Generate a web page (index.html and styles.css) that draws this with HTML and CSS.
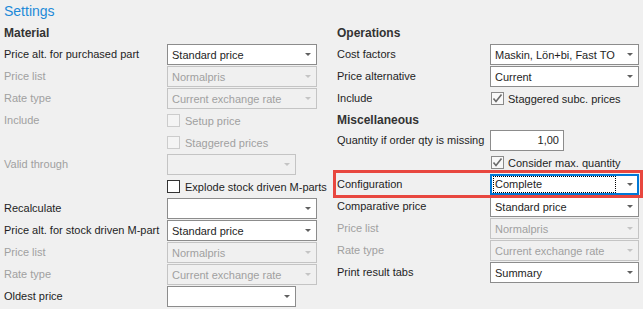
FILE: index.html
```html
<!doctype html>
<html lang="en">
<head>
	<meta charset="UTF-8">
	<title>Settings</title>
	<link rel="stylesheet" href="styles.css">
</head>
<body>
	<div class="page">
		<div class="title">Settings</div>
		<div class="cols">
			<div class="col">
				<div class="head">Material</div>
				<div class="row"><span class="lbl">Price alt. for purchased part</span><span class="combo"><span class="val">Standard price</span><i class="arrow"></i></span></div>
				<div class="row off"><span class="lbl">Price list</span><span class="combo"><span class="val">Normalpris</span><i class="arrow"></i></span></div>
				<div class="row off"><span class="lbl">Rate type</span><span class="combo"><span class="val">Current exchange rate</span><i class="arrow"></i></span></div>
				<div class="row off"><span class="lbl">Include</span><span class="check"><i class="box"></i>Setup price</span></div>
				<div class="row off"><span class="lbl"></span><span class="check"><i class="box"></i>Staggered prices</span></div>
				<div class="row off"><span class="lbl">Valid through</span><span class="combo short"><span class="val"></span><i class="arrow"></i></span></div>
				<div class="row"><span class="lbl"></span><span class="check"><i class="box"></i>Explode stock driven M-parts</span></div>
				<div class="row"><span class="lbl">Recalculate</span><span class="combo"><span class="val"></span><i class="arrow"></i></span></div>
				<div class="row"><span class="lbl">Price alt. for stock driven M-part</span><span class="combo"><span class="val">Standard price</span><i class="arrow"></i></span></div>
				<div class="row off"><span class="lbl">Price list</span><span class="combo"><span class="val">Normalpris</span><i class="arrow"></i></span></div>
				<div class="row off"><span class="lbl">Rate type</span><span class="combo"><span class="val">Current exchange rate</span><i class="arrow"></i></span></div>
				<div class="row"><span class="lbl">Oldest price</span><span class="combo short"><span class="val"></span><i class="arrow"></i></span></div>
			</div>
			<div class="col right">
				<div class="head">Operations</div>
				<div class="row"><span class="lbl">Cost factors</span><span class="combo"><span class="val">Maskin, Lön+bi, Fast TO</span><i class="arrow"></i></span></div>
				<div class="row"><span class="lbl">Price alternative</span><span class="combo"><span class="val">Current</span><i class="arrow"></i></span></div>
				<div class="row"><span class="lbl">Include</span><span class="check on"><i class="box"><svg width="11" height="11" viewBox="0 0 11 11"><path d="M1.5 5.5 L4 8.5 L9.5 1.5" fill="none" stroke="#6a6a6a" stroke-width="1.6"/></svg></i>Staggered subc. prices</span></div>
				<div class="head misc">Miscellaneous</div>
				<div class="row"><span class="lbl">Quantity if order qty is missing</span><span class="num">1,00</span></div>
				<div class="row"><span class="lbl"></span><span class="check on"><i class="box"><svg width="11" height="11" viewBox="0 0 11 11"><path d="M1.5 5.5 L4 8.5 L9.5 1.5" fill="none" stroke="#6a6a6a" stroke-width="1.6"/></svg></i>Consider max. quantity</span></div>
				<div class="row"><span class="lbl">Configuration</span><span class="combo focus"><span class="val">Complete</span><i class="arrow"></i></span></div>
				<div class="row"><span class="lbl">Comparative price</span><span class="combo"><span class="val">Standard price</span><i class="arrow"></i></span></div>
				<div class="row off"><span class="lbl">Price list</span><span class="combo"><span class="val">Normalpris</span><i class="arrow"></i></span></div>
				<div class="row off"><span class="lbl">Rate type</span><span class="combo"><span class="val">Current exchange rate</span><i class="arrow"></i></span></div>
				<div class="row"><span class="lbl">Print result tabs</span><span class="combo"><span class="val">Summary</span><i class="arrow"></i></span></div>
			</div>
		</div>
		<div class="mark"></div>
	</div>
</body>
</html>
```

FILE: styles.css
```css
* { box-sizing: border-box; }
body { margin: 0; background: #f0f0f0; font: 11px "Liberation Sans", Arial, sans-serif; color: #1e1e1e; }
.page { position: relative; width: 643px; height: 309px; overflow: hidden; }
.title { height: 22px; padding: 2px 0 0 4px; font-size: 14px; line-height: 18px; color: #1e8ad8; }
.cols { display: grid; grid-template-columns: 333px 1fr; padding-left: 4px; }
.head { height: 22px; line-height: 22px; font-size: 12px; font-weight: bold; color: #333; }
.head.misc { height: 20px; line-height: 20px; }
.row { display: grid; grid-template-columns: 163px auto; height: 22px; align-items: start; }
.right .row { grid-template-columns: 153px auto; }
.lbl { line-height: 21px; white-space: nowrap; }
.combo { display: flex; align-items: center; width: 150px; height: 21px; padding: 0 4px 0 4px; border: 1px solid #8c8c8c; background: #fff; }
.right .combo { width: 149px; }
.combo.short { width: 129px; }
.val { flex: 1; white-space: nowrap; overflow: hidden; }
.arrow { width: 0; height: 0; margin-right: 1px; border-left: 3px solid transparent; border-right: 3px solid transparent; border-top: 3px solid #606060; }
.off .lbl, .off .check { color: #a0a0a0; }
.off .combo { background: #f0f0f0; border-color: #c4c4c4; color: #a0a0a0; }
.off .arrow { border-top-color: #c4c4c4; }
.combo.focus { border: 2px solid #0078d7; padding: 0 3px 0 1px; }
.combo.focus .val { height: 17px; line-height: 15px; margin-right: 11px; padding-left: 1px; outline: 1px dotted #000; outline-offset: -1px; border: 1px solid transparent; }
.check { display: flex; align-items: center; height: 21px; white-space: nowrap; }
.box { display: flex; align-items: center; justify-content: center; width: 13px; height: 13px; margin-right: 5px; border: 1px solid #333; background: #fff; }
.off .box { border-color: #cccccc; background: #f4f4f4; }
.check.on .box { border-color: #8a8a8a; background: #f8f8f8; margin-left: 1px; margin-right: 4px; }
.num { width: 74px; height: 21px; padding-right: 4px; line-height: 19px; text-align: right; border: 1px solid #8c8c8c; background: #fff; }
.mark { position: absolute; left: 333px; top: 170px; width: 310px; height: 28px; border: 3px solid #e8473f; }
```
